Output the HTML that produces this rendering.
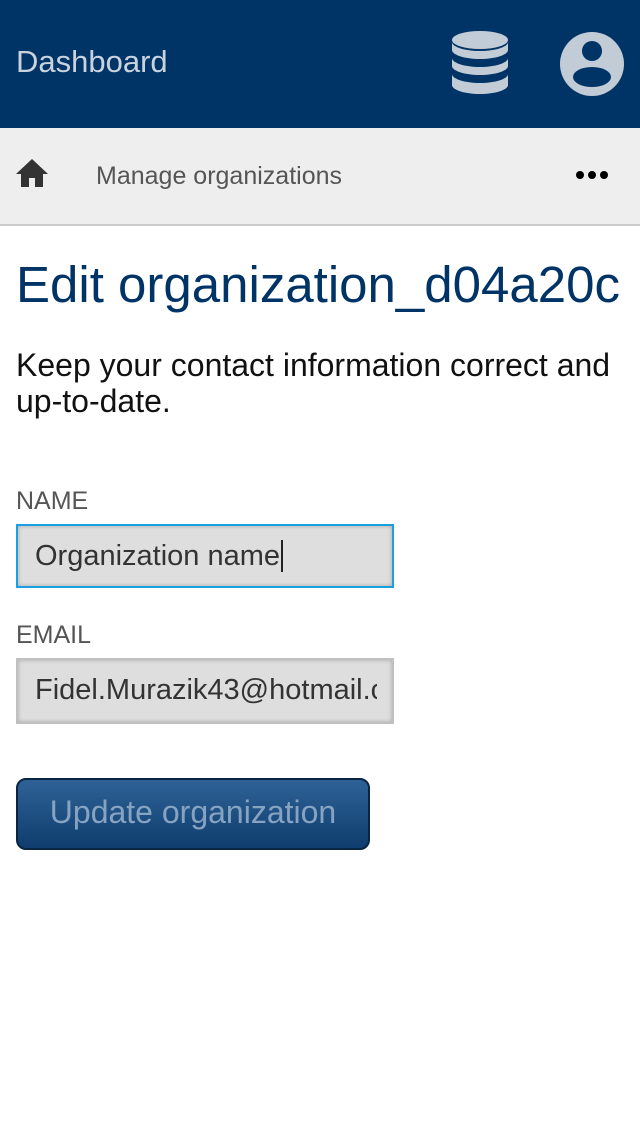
<!DOCTYPE html>
<html><head><meta charset="utf-8"><style>
*{margin:0;padding:0;box-sizing:border-box}
body{width:640px;height:1136px;background:#fff;font-family:"Liberation Sans",sans-serif;position:relative;overflow:hidden}
.hdr{position:absolute;left:0;top:0;width:640px;height:128px;background:#003366}
.hdr .t{position:absolute;left:16px;top:44px;font-size:31px;color:#c9d3de}
.nav{position:absolute;left:0;top:128px;width:640px;height:98px;background:#eeeeee;border-bottom:2px solid #ccc}
.nav .m{position:absolute;left:96px;top:34px;font-size:25px;color:#555}
h1{position:absolute;left:16px;top:255px;font-size:51px;font-weight:normal;color:#003366;white-space:nowrap}
.p{position:absolute;left:16px;top:347px;font-size:32px;line-height:36px;color:#111;width:620px}
.lbl{position:absolute;left:16px;font-size:25px;color:#555}
.in{position:absolute;left:16px;width:378px;height:64px;background:#dedede;font-size:29px;color:#333;padding:14px 0 0 17px;white-space:nowrap;overflow:hidden;box-shadow:inset 0 0 4px rgba(0,0,0,.25)}
.in .c{display:inline-block;width:342px;overflow:hidden;vertical-align:top}
.btn{position:absolute;left:16px;top:778px;width:354px;height:72px;border-radius:10px;border:2px solid #0a2542;background:linear-gradient(#2e6296,#0f3d6e);color:#86a3c2;font-size:32px;text-align:center;line-height:64px}
</style></head><body>
<div class="hdr"><div class="t">Dashboard</div>
<svg style="position:absolute;left:450px;top:30px" width="60" height="68" viewBox="0 0 60 68"><g fill="#c2ccd6"><ellipse cx="30" cy="10" rx="28" ry="9"/><path d="M2 12v8c0 5 13 9 28 9s28-4 28-9v-8c0 5-13 9-28 9S2 17 2 12z"/><path d="M2 28v8c0 5 13 9 28 9s28-4 28-9v-8c0 5-13 9-28 9S2 33 2 28z"/><path d="M2 44v11c0 5 13 9 28 9s28-4 28-9V44c0 5-13 9-28 9S2 49 2 44z"/></g></svg>
<svg style="position:absolute;left:559px;top:31px" width="66" height="66" viewBox="0 0 66 66"><circle cx="33" cy="33" r="32" fill="#c2ccd6"/><circle cx="33" cy="20" r="10" fill="#003366"/><ellipse cx="33" cy="46" rx="19" ry="10" fill="#003366"/></svg>
</div>
<div class="nav">
<svg style="position:absolute;left:16px;top:30px" width="32" height="30" viewBox="0 0 32 30"><path d="M16 1L0 16h5v13h8v-9h6v9h8V16h5z" fill="#333"/></svg>
<div class="m">Manage organizations</div>
<svg style="position:absolute;left:575px;top:42px" width="36" height="10"><circle cx="5" cy="5" r="4"/><circle cx="17" cy="5" r="4"/><circle cx="29" cy="5" r="4"/></svg>
</div>
<h1>Edit organization_d04a20c</h1>
<div class="p">Keep your contact information correct and up-to-date.</div>
<div class="lbl" style="top:487px">NAME</div>
<div class="in" style="top:524px;border:2px solid #1a9fe0">Organization name<span style="border-left:2px solid #222;margin-left:1px"></span></div>
<div class="lbl" style="top:621px">EMAIL</div>
<div class="in" style="top:658px;height:66px;border:2px solid #c0c0c0"><span class="c">Fidel.Murazik43@hotmail.com</span></div>
<div class="btn">Update organization</div>
</body></html>
